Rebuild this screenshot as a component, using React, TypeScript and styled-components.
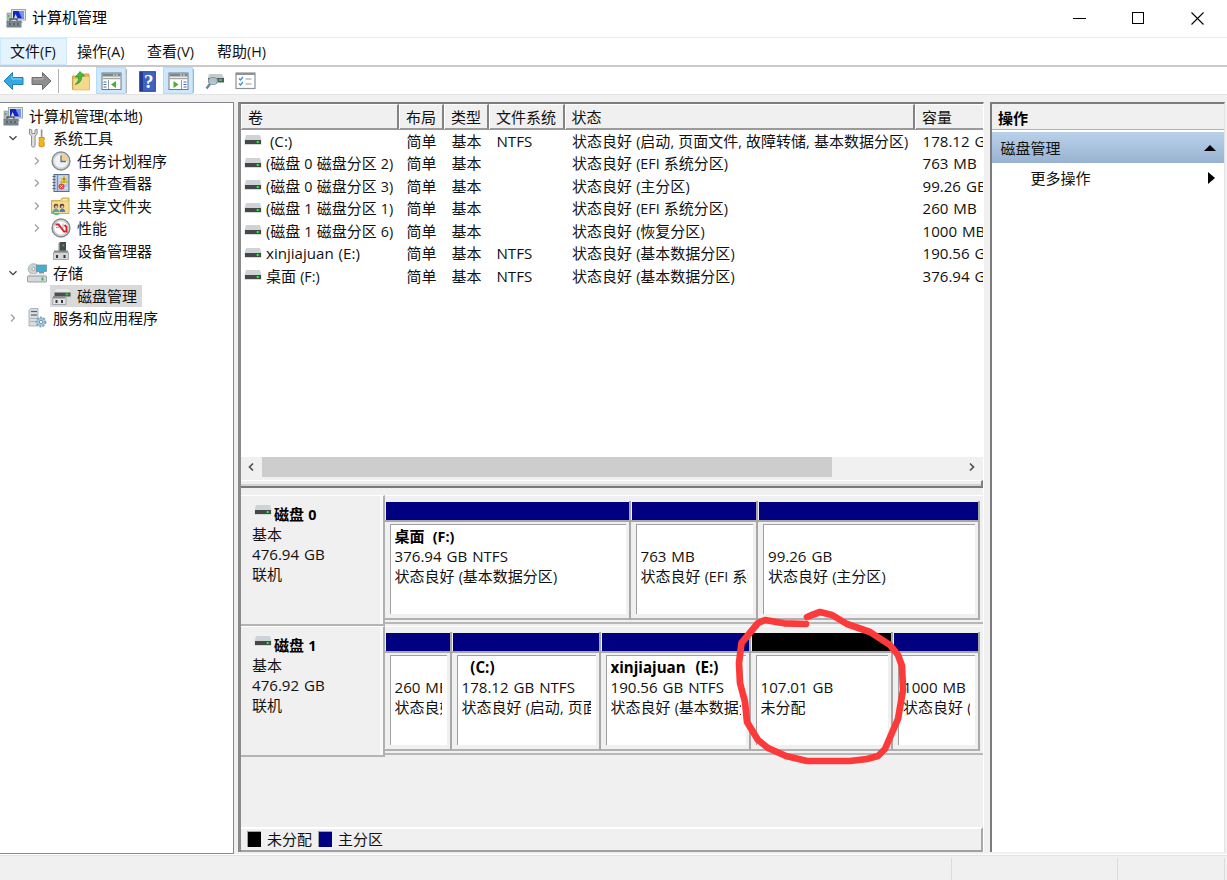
import React from "react";
import styled, { createGlobalStyle } from "styled-components";

const GlobalStyle = createGlobalStyle`
  * { box-sizing: border-box; }
  html, body { margin: 0; padding: 0; background: #f0f0f0; overflow: hidden; }
  svg { display: block; flex: none; }
`;

const Window = styled.div`
  position: relative;
  width: 1227px;
  height: 880px;
  display: flex;
  flex-direction: column;
  background: #f0f0f0;
  color: #111;
  font: 15px/20px "Noto Sans CJK SC", sans-serif;
  white-space: nowrap;
  overflow: hidden;
`;

const Latin = styled.span<{ $alone: boolean }>`
  font-family: "Open Sans", sans-serif;
  font-size: ${(p) => (p.$alone ? 15.1 : 14.3)}px;
  line-height: 1;
  word-spacing: ${(p) => (p.$alone ? 1 : 0.4)}px;
  white-space: pre;
`;

function Label({ children }: { children: string }) {
  const parts = children.split(/([\x20-\x7e]+)/);
  const alone = parts.every((part, i) => i % 2 === 1 || part === "");
  return (
    <>
      {parts.map((part, i) => (i % 2 ? <Latin key={i} $alone={alone}>{part}</Latin> : part))}
    </>
  );
}

/* ---------- title bar, menu, toolbar ---------- */

const TitleBar = styled.header`
  height: 37px;
  display: flex;
  align-items: center;
  padding: 0 0 2px 6px;
  gap: 6px;
  background: #fff;
`;
const TitleText = styled.span`
  flex: 1;
  padding-bottom: 1px;
  color: #000;
`;
const Caption = styled.div`
  display: flex;
  gap: 46px;
  padding: 2px 23px 0 0;
`;
const MenuBar = styled.nav`
  height: 30px;
  display: flex;
  border-top: 1px solid #ececec;
  border-bottom: 2px solid #cacaca;
  background: #fff;
`;
const MenuItem = styled.div<{ $w: number; $active?: boolean }>`
  width: ${(p) => p.$w}px;
  padding-left: ${(p) => (p.$active ? 9 : 10)}px;
  line-height: ${(p) => (p.$active ? 23 : 25)}px;
  border: ${(p) => (p.$active ? "1px solid #cce8ff" : "0")};
  background: ${(p) => (p.$active ? "#e5f3ff" : "transparent")};
`;
const ToolBar = styled.div`
  height: 28px;
  display: flex;
  align-items: stretch;
  background: #fff;
  border-bottom: 1px solid #e4e4e4;
`;
const Tool = styled.div<{ $w: number; $on?: boolean }>`
  width: ${(p) => p.$w}px;
  display: flex;
  align-items: center;
  justify-content: center;
  padding-top: 1px;
  background: ${(p) => (p.$on ? "#cce8ff" : "transparent")};
  border: ${(p) => (p.$on ? "1px solid #b4dcfa" : "0")};
`;
const ToolSep = styled.div<{ $l?: number; $r?: number }>`
  width: 1px;
  margin: 2px ${(p) => p.$r ?? 0}px 1px ${(p) => p.$l ?? 0}px;
  background: #b4b4b4;
`;

/* ---------- panes ---------- */

const Panes = styled.main`
  height: 759px;
  padding-top: 7px;
  display: flex;
`;
const TreePane = styled.aside`
  width: 234px;
  height: 752px;
  margin-right: 4px;
  padding-top: 1.5px;
  background: #fff;
  border-top: 1px solid #828790;
  border-right: 1px solid #828790;
  border-bottom: 1px solid #828790;
`;
const TreeRow = styled.div`
  height: 22.5px;
  display: flex;
  align-items: center;
`;
const Chevron = styled.div<{ $level: number }>`
  width: 26px;
  margin-left: ${(p) => (p.$level === 0 ? -24 : (p.$level - 1) * 24)}px;
  padding-left: 8px;
`;
const TreeItem = styled.div<{ $selected?: boolean }>`
  height: 22px;
  display: flex;
  align-items: center;
  gap: 6px;
  padding: 0 4.5px 0 1px;
  line-height: 22px;
  background: ${(p) => (p.$selected ? "#d9d9d9" : "transparent")};
`;
const CenterPane = styled.section`
  width: 746px;
  height: 750px;
  margin: 0 6px 0 0;
  border-left: 3px solid #8a8a8a;
  border-top: 2px solid #7c7c7c;
  border-right: 1px solid #fff;
  display: flex;
  flex-direction: column;
  overflow: hidden;
`;

/* ---------- volume list ---------- */

const columns = "158px 45px 45px 75.5px 350.5px 100px";

const VolumeList = styled.div`
  height: 353px;
  width: 742px;
  background: #fff;
  overflow: hidden;
`;
const HeaderRow = styled.div`
  display: grid;
  grid-template-columns: ${columns};
  height: 25.5px;
  background: #f0f0f0;
  border-bottom: 2px solid #9a9a9a;
`;
const HeaderCell = styled.div`
  padding-left: 6px;
  line-height: 24px;
  border-left: 1px solid #fff;
  border-top: 1px solid #fff;
  border-right: 2px solid #838383;
`;
const VolumeRow = styled.div`
  display: grid;
  grid-template-columns: ${columns};
  height: 22.5px;
  line-height: 21px;
`;
const VolumeCell = styled.div`
  display: flex;
  align-items: center;
  padding: 0 0 1px 7.5px;
`;
const NameCell = styled.div`
  display: flex;
  align-items: center;
  gap: 4px;
  padding: 0 0 1px 3px;
`;
const ScrollBar = styled.div`
  height: 21px;
  width: 742px;
  display: flex;
  align-items: center;
  justify-content: space-between;
  background: #f0f0f0;
  padding: 0 7px 1px 0;
`;
const ScrollThumb = styled.div`
  width: 570px;
  height: 20px;
  margin-right: auto;
  margin-left: 6px;
  background: #cdcdcd;
`;
const Splitter = styled.div`
  height: 8px;
  width: 742px;
  margin-top: 2px;
  border-top: 1px solid #fff;
  border-right: 2px solid #808080;
  border-bottom: 2px solid #7a7a7a;
  flex: none;
  background: linear-gradient(#f0f0f0 0 3px, #d4d4d4 3px 5px);
`;
const GraphGap = styled.div`
  height: 7px;
  flex: none;
`;

/* ---------- disk graph ---------- */

const DiskRow = styled.div`
  display: flex;
  height: 131px;
  flex: none;
`;
const DiskLabel = styled.div`
  width: 143.5px;
  padding: 8px 0 0 11px;
  line-height: 20.1px;
  border-top: 1px solid #fff;
  border-right: 2px solid #b0b0b0;
  border-bottom: 2px solid #b4b4b4;
  box-shadow: inset -3px 0 0 #f8f8f8;
`;
const DiskName = styled.div`
  display: flex;
  gap: 2px;
  padding-left: 2px;
  font-weight: 700;
  color: #000;
`;
const Partitions = styled.div`
  display: flex;
  width: 598px;
  height: 129px;
  padding-top: 5px;
  border-top: 1px solid #fff;
  border-bottom: 2px solid #b8b8b8;
`;
const Partition = styled.div<{ $w: number }>`
  width: ${(p) => p.$w}px;
  flex: none;
  height: 119px;
  display: flex;
  flex-direction: column;
  border-right: 2px solid #a8a8a8;
  border-bottom: 2px solid #b0b0b0;
  padding-top: 1px;
`;
const Band = styled.div<{ $free?: boolean }>`
  height: 18px;
  flex: none;
  margin: 0 0 0 1px;
  background: ${(p) => (p.$free ? "#000" : "#000080")};
`;
const BandLine = styled.div`
  height: 1.5px;
  flex: none;
  background: #a8a8a8;
`;
const PartitionBox = styled.div`
  flex: 1;
  min-height: 0;
  margin: 2px 3px 4px 5px;
  border-left: 1.5px solid #a0a0a0;
  border-top: 1.5px solid #a0a0a0;
  background: #fff;
  padding: 1.5px 5px 0 4px;
`;
const PartitionText = styled.div`
  height: 84px;
  overflow: hidden;
  line-height: 20.3px;
`;
const PartitionTitle = styled.div`
  height: 20px;
  font-weight: 700;
  color: #000;
`;
const Filler = styled.div`
  flex: 1;
`;
const Legend = styled.footer`
  height: 25px;
  width: 742px;
  display: flex;
  align-items: center;
  padding: 0 0 1px 6px;
  border-top: 2px solid #fff;
  border-right: 2px solid #a8a8a8;
  border-bottom: 2px solid #a0a0a0;
  flex: none;
`;
const Swatch = styled.span<{ $c: string }>`
  width: 14px;
  height: 16px;
  margin-right: 6px;
  border-left: 1px solid #a0a0a0;
  border-top: 1px solid #a0a0a0;
  background: ${(p) => p.$c};
`;
const LegendText = styled.span`
  margin-right: 6px;
`;

/* ---------- actions pane ---------- */

const ActionsPane = styled.aside`
  width: 235px;
  height: 750px;
  border-left: 2px solid #7c7c7c;
  border-top: 2px solid #7c7c7c;
  border-right: 1px solid #e4e4e4;
  background: #fff;
`;
const ActionsTitle = styled.div`
  height: 26px;
  padding-left: 6px;
  line-height: 27px;
  font-weight: 700;
  background: #f0f0f0;
  border-bottom: 1px solid #b4b4b4;
  color: #000;
`;
const ActionsGroup = styled.div`
  height: 31px;
  margin-top: 2px;
  padding: 0 8px 0 8.5px;
  display: flex;
  align-items: center;
  justify-content: space-between;
  background: linear-gradient(#b9d1ea, #98b2d1);
`;
const ActionsItem = styled.div`
  height: 29px;
  padding: 0 9px 0 38.5px;
  display: flex;
  align-items: center;
  justify-content: space-between;
`;

const StatusBar = styled.footer`
  height: 26px;
  display: flex;
  justify-content: flex-end;
  border-top: 1px solid #fff;
  box-shadow: inset 0 1px 0 #e2e2e2;
  padding: 3px 2px 0 0;
`;
const StatusCell = styled.div<{ $w: number }>`
  width: ${(p) => p.$w}px;
  border-left: 1px solid #dcdcdc;
`;
const LastStatusCell = styled(StatusCell)`
  border-right: 1px solid #dcdcdc;
`;
const Annotation = styled.svg`
  position: absolute;
  left: 730px;
  top: 605px;
`;

/* ---------- icons ---------- */

const Computer = () => (
  <svg width="20" height="20" viewBox="0 0 20 20">
    <rect x="1" y="5" width="5" height="9" fill="#b4babd" stroke="#8b9294" strokeWidth=".6" />
    <rect x="1.6" y="7" width="1.6" height="2" fill="#39c33c" />
    <rect x="5.5" y="1.5" width="14" height="10.5" fill="#e2e4e2" stroke="#a2a6a3" />
    <path d="M7 3h11v7.5H7z" fill="#1226c4" />
    <path d="M12.5 3H18v7.5h-2z" fill="#6f95f0" />
    <path d="M9 12h6l2 3h-6z" fill="#b8bcbe" />
    <path d="m9.5 6 1.5 3 1 4-5 0z" fill="#d5d8de" />
    <path d="M4 13v-2h7v2" fill="none" stroke="#505a60" strokeWidth="1.3" />
    <rect x=".5" y="13" width="15" height="6.5" fill="#75828a" />
    <path d="M.5 16h15" stroke="#98a3a8" strokeWidth=".8" />
    <path d="M4 15v2.200M8 15v2.200M12 15v2.200" stroke="#3f4a50" strokeWidth="1.200" />
  </svg>
);

const Drive = () => (
  <svg width="18" height="12" viewBox="0 0 18 12">
    <path d="M2 1h14l1.500 5H.5z" fill="#cfd3d8" />
    <path d="M.5 6h17v5H.5z" fill="#d6d8da" />
    <path d="M1 6h16v4H1z" fill="#454849" />
    <rect x="12" y="7" width="3.500" height="2" fill="#1f8f2a" />
    <rect x="13" y="7" width="1.500" height="2" fill="#35f048" />
  </svg>
);

const Tools = () => (
  <svg width="20" height="20" viewBox="0 0 20 20">
    <path d="M2.500 1v5l2 2v9.500c0 2.200 3.600 2.200 3.600 0V8l2-2V1L8 2v3.500H4.800V2z" fill="#dcdedd" stroke="#818583" strokeWidth=".9" />
    <path d="M13.800 1.500h1.600V10h-1.600z" fill="#909494" />
    <path d="M12 9.500h5.200v2.500l-1 1 1 1.500V18q-2.600 2-5.200 0v-3.500l1-1.500-1-1z" fill="#f5b41c" stroke="#c98510" strokeWidth=".8" />
  </svg>
);

const Clock = () => (
  <svg width="20" height="20" viewBox="0 0 20 20">
    <circle cx="10" cy="10" r="8.900" fill="#e3e7ec" stroke="#8a8c8e" strokeWidth="1.500" />
    <circle cx="10" cy="10" r="7.300" fill="#f0f3f8" stroke="#c4c7ca" />
    <path d="M10 3a7 7 0 0 1 7 7h-7z" fill="#f3d18c" />
    <path d="M10 4.500V10.500H15" fill="none" stroke="#59738f" strokeWidth="1.300" />
  </svg>
);

const EventLog = () => (
  <svg width="20" height="20" viewBox="0 0 20 20">
    <rect x="3" y="1.500" width="15" height="17" fill="#b8cbe4" stroke="#5b6c91" />
    <path d="M6.500 2v16" stroke="#7890b6" />
    <path d="M1.500 3.500h3m-3 3h3m-3 3h3m-3 3h3m-3 3h3" stroke="#5a6277" strokeWidth="1.200" />
    <path d="M8 4h8M8 7h8M8 10h8M8 15h9" stroke="#e6edf7" />
    <path d="m13 3 3.500 6.500H9.500z" fill="#f6d51e" stroke="#c39d14" strokeWidth=".6" />
    <path d="M13 5.200v2M13 8v.8" stroke="#333" />
    <circle cx="10.500" cy="13.500" r="3" fill="#df4548" />
    <path d="m9.400 12.400 2.200 2.200m0-2.200-2.200 2.200" stroke="#fff" strokeWidth=".9" />
  </svg>
);

const SharedFolder = () => (
  <svg width="20" height="20" viewBox="0 0 20 20">
    <path d="M.5 4.500h9l1.500-2.500h7v15.500H.5z" fill="#efcf75" stroke="#c59a3c" strokeWidth=".8" />
    <path d="M1 6h16.500v11H1z" fill="#f6dc92" />
    <path d="M11.500 3.800h5" stroke="#fff3cf" />
    <circle cx="5" cy="10" r="2.300" fill="#6b4a35" />
    <circle cx="5.300" cy="10.800" r="1.400" fill="#e8bd98" />
    <circle cx="11" cy="10" r="2.300" fill="#4b3a33" />
    <circle cx="11.300" cy="10.800" r="1.400" fill="#e8bd98" />
    <path d="M2 16q0-3.500 3-3.500t3 3.500z" fill="#5a9fc0" />
    <path d="M8.500 16q0-3.500 2.800-3.500t2.800 3.500z" fill="#4d7fae" />
    <path d="M1 15.500q2.500 4 7 2" fill="none" stroke="#58b98a" strokeWidth="2" />
  </svg>
);

const Gauge = () => (
  <svg width="20" height="20" viewBox="0 0 20 20">
    <circle cx="10" cy="10" r="8.900" fill="#e8e8e8" stroke="#86898b" strokeWidth="1.500" />
    <circle cx="10" cy="10" r="7.200" fill="#fff" stroke="#bbb" strokeWidth=".8" />
    <path d="M8 5.500v4M12 5.500v5M5 9.500h3" fill="none" stroke="#999" strokeWidth=".9" />
    <path d="M4.500 6.500h3l5.500 7h2.500V9l-2-2" fill="none" stroke="#dc2027" strokeWidth="1.900" />
  </svg>
);

const Device = () => (
  <svg width="20" height="20" viewBox="0 0 20 20">
    <path d="M9 1h6v9H9z" fill="#454b4d" />
    <path d="m9 1-1.500 1v8H9z" fill="#858b8d" />
    <rect x="11.500" y="3.500" width="1.800" height="1.800" fill="#24d23a" />
    <path d="M3 9.500h14v2.500H3z" fill="#85898b" />
    <path d="M2.500 11.500h15v7h-15z" fill="#d3d5d6" stroke="#989c9e" strokeWidth=".8" />
    <path d="M5 14h2v3H5zM12.500 14h2v3h-2z" fill="#303638" />
  </svg>
);

const Storage = () => (
  <svg width="20" height="20" viewBox="0 0 20 20">
    <circle cx="6.500" cy="6" r="5.300" fill="#cbd2d7" stroke="#92989d" strokeWidth=".7" />
    <circle cx="6.500" cy="6" r="1.500" fill="#fff" stroke="#777" strokeWidth=".6" />
    <path d="M1 5q1-3 4-4l1 4z" fill="#bddbb3" />
    <rect x="9.500" y="2" width="10" height="6.500" fill="#43afd1" stroke="#71868d" strokeWidth=".7" />
    <path d="M12 8.500h5v2h-5z" fill="#879197" />
    <path d="M2 11h16l1.500 2.500H.5z" fill="#e8ebed" />
    <rect x=".5" y="13" width="19" height="6" rx="1" fill="#d4d8db" stroke="#858b90" strokeWidth=".8" />
    <rect x="14.500" y="14.500" width="2" height="3" fill="#28bf36" />
  </svg>
);

const DiskManage = () => (
  <svg width="20" height="20" viewBox="0 0 20 20">
    <path d="M5.500 3h12l2 3.500h-16z" fill="#e6e8e9" />
    <path d="M3.500 6.500h16v4h-16z" fill="#4b4f50" />
    <rect x="14.500" y="7.500" width="3" height="1.800" fill="#24d435" />
    <path d="M2 11h13v7.500H1.500z" fill="#e2e4e5" stroke="#949899" strokeWidth=".8" />
    <path d="M2 10h12v2.500H2z" fill="#8a8d8e" />
    <path d="M4.500 14h2v3h-2zM10 14h2v3h-2z" fill="#34393b" />
  </svg>
);

const Services = () => (
  <svg width="20" height="20" viewBox="0 0 20 20">
    <path d="m2 2 2-1.500h7V18H2z" fill="#d8dee2" stroke="#9aa5ad" strokeWidth=".8" />
    <path d="M4 3.500h6" stroke="#53636e" strokeWidth="1.200" />
    <path d="M4 7h6" stroke="#53636e" strokeWidth="1.200" />
    <path d="M3 10.500h8M3 13.500h6" stroke="#aab3b9" />
    <circle cx="14" cy="14" r="4.400" fill="#abc9df" stroke="#7da4c0" strokeWidth="2" strokeDasharray="2 1.200" />
    <circle cx="14" cy="14" r="1.700" fill="#eff6fa" stroke="#759ab5" />
  </svg>
);

const Arrow = ({ forward }: { forward?: boolean }) => (
  <svg width="21" height="20" viewBox="0 0 21 20">
    <path
      d={forward ? "M20 10 11.500 1.500v5H1v7h10.500v5z" : "M1 10 9.500 1.500v5H20v7H9.500v5z"}
      fill={forward ? "#8e8e8e" : "#30a9e6"}
      stroke={forward ? "#6e6e6e" : "#247eae"}
      strokeLinejoin="round"
    />
    <path d={forward ? "M2 8h10V5" : "M19 8H9V5"} fill="none" stroke={forward ? "#b6b6b6" : "#82d5f6"} />
  </svg>
);

const FolderUp = () => (
  <svg width="20" height="22" viewBox="0 0 20 22">
    <path d="M1.500 6h7l2-2H18v15.500H1.500z" fill="#e8bd58" stroke="#bd9440" strokeWidth=".8" />
    <path d="M2 8.500h7l2-2h7.500V20H2z" fill="#f5d98a" stroke="#d7ad51" strokeWidth=".6" />
    <path d="M4 14.500q4-2.500 3.500-7.500H4.500L9 1.500 13.500 6h-2.700q.2 7-6.800 8.500z" fill="#41ba3d" stroke="#27912b" strokeWidth=".7" />
  </svg>
);

const PanelIcon = ({ right }: { right?: boolean }) => (
  <svg width="21" height="19" viewBox="0 0 21 19">
    <rect x="1" y="1" width="19" height="16.500" fill="#fff" stroke="#777" />
    <rect x="1.500" y="1.500" width="18" height="3" fill="#7e8588" />
    <path d="M12 3h2m1 0h2" stroke="#e3e7e9" />
    <path d="M1.500 6.500h18" stroke="#a2a7a9" strokeWidth="1.500" />
    <path d={right ? "M13.500 8v9" : "M7.500 8v9"} stroke="#999" />
    <path d={right ? "M15.500 10h3m-3 2.500h3m-3 2.500h3" : "M2.500 10h3m-3 2.500h3m-3 2.500h3"} stroke="#3c6fae" strokeWidth="1.200" />
    <path d={right ? "m5.500 9 5 3.500-5 3.500z" : "m15 9-5 3.500 5 3.500z"} fill="#4cae2c" />
  </svg>
);

const HelpIcon = () => (
  <svg width="17" height="21" viewBox="0 0 17 21">
    <rect x=".7" y=".7" width="15.600" height="19.600" fill="#3e63c1" stroke="#26428f" />
    <path d="M1 1h3v19H1z" fill="#233c91" />
    <text x="9.700" y="16.500" textAnchor="middle" fill="#fff" fontFamily="Liberation Serif, serif" fontSize="19" fontWeight="700">?</text>
  </svg>
);

const DriveSearch = () => (
  <svg width="20" height="18" viewBox="0 0 20 18">
    <path d="M4 2h13l2 4H3z" fill="#c6cbcc" />
    <path d="M3 6h16v4.500H3z" fill="#555b5d" />
    <rect x="14" y="7" width="3" height="2" fill="#26d43d" />
    <ellipse cx="8" cy="9" rx="4.500" ry="3.500" fill="#b8cdd8" fillOpacity=".9" stroke="#8798a2" strokeWidth="1.200" />
    <path d="m5 12-3.500 4.500" stroke="#6c8595" strokeWidth="2.400" />
  </svg>
);

const Checklist = () => (
  <svg width="21" height="18" viewBox="0 0 21 18">
    <rect x="1" y="1" width="19" height="15.500" fill="#fff" stroke="#8d9294" strokeWidth="1.200" />
    <path d="M1 2h19" stroke="#8d9294" strokeWidth="2" />
    <path d="m4 6.500 1.500 1.500L8 5M4 11.500 5.500 13 8 10" fill="none" stroke="#3b90cf" strokeWidth="1.300" />
    <path d="M10.500 7h6m-6 5h6" stroke="#b6babc" strokeWidth="1.300" />
  </svg>
);

const ChevronIcon = ({ dir }: { dir: "down" | "right" }) => (
  <svg width="10" height="10" viewBox="0 0 10 10">
    <path
      d={dir === "down" ? "M1.500 3.200 5 6.700l3.500-3.500" : "M3 1.500 6.500 5 3 8.500"}
      fill="none"
      stroke={dir === "down" ? "#404040" : "#a0a0a0"}
      strokeWidth="1.300"
    />
  </svg>
);

/* ---------- data ---------- */

type Node = { level: number; open?: "down" | "right"; icon: React.ReactNode; text: string; selected?: boolean };

const tree: Node[] = [
  { level: 0, icon: <Computer />, text: "计算机管理(本地)" },
  { level: 1, open: "down", icon: <Tools />, text: "系统工具" },
  { level: 2, open: "right", icon: <Clock />, text: "任务计划程序" },
  { level: 2, open: "right", icon: <EventLog />, text: "事件查看器" },
  { level: 2, open: "right", icon: <SharedFolder />, text: "共享文件夹" },
  { level: 2, open: "right", icon: <Gauge />, text: "性能" },
  { level: 2, icon: <Device />, text: "设备管理器" },
  { level: 1, open: "down", icon: <Storage />, text: "存储" },
  { level: 2, icon: <DiskManage />, text: "磁盘管理", selected: true },
  { level: 1, open: "right", icon: <Services />, text: "服务和应用程序" },
];

const volumes = [
  [" (C:)", "NTFS", "状态良好 (启动, 页面文件, 故障转储, 基本数据分区)", "178.12 GB"],
  ["(磁盘 0 磁盘分区 2)", "", "状态良好 (EFI 系统分区)", "763 MB"],
  ["(磁盘 0 磁盘分区 3)", "", "状态良好 (主分区)", "99.26 GB"],
  ["(磁盘 1 磁盘分区 1)", "", "状态良好 (EFI 系统分区)", "260 MB"],
  ["(磁盘 1 磁盘分区 6)", "", "状态良好 (恢复分区)", "1000 MB"],
  ["xinjiajuan (E:)", "NTFS", "状态良好 (基本数据分区)", "190.56 GB"],
  ["桌面 (F:)", "NTFS", "状态良好 (基本数据分区)", "376.94 GB"],
];

type Part = { w: number; title: string; size: string; status: string; free?: boolean };

const disks: { name: string; size: string; parts: Part[] }[] = [
  {
    name: "磁盘 0",
    size: "476.94 GB",
    parts: [
      { w: 246, title: "桌面  (F:)", size: "376.94 GB NTFS", status: "状态良好 (基本数据分区)" },
      { w: 127.5, title: "", size: "763 MB", status: "状态良好 (EFI 系统分区)" },
      { w: 222, title: "", size: "99.26 GB", status: "状态良好 (主分区)" },
    ],
  },
  {
    name: "磁盘 1",
    size: "476.92 GB",
    parts: [
      { w: 67, title: "", size: "260 MB", status: "状态良好 (EFI 系统分区)" },
      { w: 149, title: "  (C:)", size: "178.12 GB NTFS", status: "状态良好 (启动, 页面文件, 故障转储)" },
      { w: 150, title: "xinjiajuan  (E:)", size: "190.56 GB NTFS", status: "状态良好 (基本数据分区)" },
      { w: 142.5, title: "", size: "107.01 GB", status: "未分配", free: true },
      { w: 87, title: "", size: "1000 MB", status: "状态良好 (恢复分区)" },
    ],
  },
];

export default function App() {
  return (
    <>
      <GlobalStyle />
      <Window>
        <TitleBar>
          <Computer />
          <TitleText>计算机管理</TitleText>
          <Caption>
            <svg width="13" height="13"><path d="M0 6.500h13" stroke="#000" /></svg>
            <svg width="13" height="13"><rect x=".5" y=".5" width="11" height="11" fill="none" stroke="#000" /></svg>
            <svg width="13" height="13"><path d="m.5.5 12 12m0-12-12 12" stroke="#000" strokeWidth="1.100" /></svg>
          </Caption>
        </TitleBar>
        <MenuBar>
          <MenuItem $w={67} $active><Label>文件(F)</Label></MenuItem>
          <MenuItem $w={70}><Label>操作(A)</Label></MenuItem>
          <MenuItem $w={70}><Label>查看(V)</Label></MenuItem>
          <MenuItem $w={70}><Label>帮助(H)</Label></MenuItem>
        </MenuBar>
        <ToolBar>
          <Tool $w={26}><Arrow /></Tool>
          <Tool $w={31}><Arrow forward /></Tool>
          <ToolSep $l={1} $r={7} />
          <Tool $w={30}><FolderUp /></Tool>
          <Tool $w={30} $on><PanelIcon /></Tool>
          <ToolSep $r={5} />
          <Tool $w={31}><HelpIcon /></Tool>
          <Tool $w={30} $on><PanelIcon right /></Tool>
          <ToolSep $r={6} />
          <Tool $w={30}><DriveSearch /></Tool>
          <Tool $w={30}><Checklist /></Tool>
        </ToolBar>
        <Panes>
          <TreePane>
            {tree.map((n) => (
              <TreeRow key={n.text}>
                <Chevron $level={n.level}>{n.open && <ChevronIcon dir={n.open} />}</Chevron>
                <TreeItem $selected={n.selected}>
                  {n.icon}
                  <span><Label>{n.text}</Label></span>
                </TreeItem>
              </TreeRow>
            ))}
          </TreePane>
          <CenterPane>
            <VolumeList>
              <HeaderRow>
                {["卷", "布局", "类型", "文件系统", "状态", "容量"].map((h) => (
                  <HeaderCell key={h}>{h}</HeaderCell>
                ))}
              </HeaderRow>
              {volumes.map(([name, fs, status, size]) => (
                <VolumeRow key={name}>
                  <NameCell><Drive /><span><Label>{name}</Label></span></NameCell>
                  <VolumeCell>简单</VolumeCell>
                  <VolumeCell>基本</VolumeCell>
                  <VolumeCell><span><Label>{fs}</Label></span></VolumeCell>
                  <VolumeCell><span><Label>{status}</Label></span></VolumeCell>
                  <VolumeCell><span><Label>{size}</Label></span></VolumeCell>
                </VolumeRow>
              ))}
            </VolumeList>
            <ScrollBar>
              <svg width="15" height="10"><path d="M12 1.500 8.500 5l3.500 3.500" fill="none" stroke="#505050" strokeWidth="1.700" /></svg>
              <ScrollThumb />
              <svg width="8" height="10"><path d="M2 1.500 5.500 5 2 8.500" fill="none" stroke="#505050" strokeWidth="1.700" /></svg>
            </ScrollBar>
            <Splitter />
            <GraphGap />
            {disks.map((d) => (
              <DiskRow key={d.name}>
                <DiskLabel>
                  <DiskName><Drive /><span><Label>{d.name}</Label></span></DiskName>
                  <div>基本</div>
                  <div><Label>{d.size}</Label></div>
                  <div>联机</div>
                </DiskLabel>
                <Partitions>
                  {d.parts.map((p) => (
                    <Partition key={p.size} $w={p.w}>
                      <Band $free={p.free} />
                      <BandLine />
                      <PartitionBox>
                        <PartitionText>
                          <PartitionTitle><Label>{p.title}</Label></PartitionTitle>
                          <div><Label>{p.size}</Label></div>
                          <div><Label>{p.status}</Label></div>
                        </PartitionText>
                      </PartitionBox>
                    </Partition>
                  ))}
                </Partitions>
              </DiskRow>
            ))}
            <Filler />
            <Legend>
              <Swatch $c="#000" /><LegendText>未分配</LegendText>
              <Swatch $c="#000080" /><LegendText>主分区</LegendText>
            </Legend>
          </CenterPane>
          <ActionsPane>
            <ActionsTitle>操作</ActionsTitle>
            <ActionsGroup>
              磁盘管理
              <svg width="12" height="7"><path d="M0 7 6 1l6 6z" /></svg>
            </ActionsGroup>
            <ActionsItem>
              更多操作
              <svg width="7" height="12"><path d="m0 0 7 6-7 6z" /></svg>
            </ActionsItem>
          </ActionsPane>
        </Panes>
        <StatusBar>
          <StatusCell $w={166} />
          <LastStatusCell $w={108} />
        </StatusBar>
        <Annotation width="180" height="165" viewBox="730 605 180 165">
          <path
            d="M806 624 784 623.300 765 620 758 623 741.500 643 739 663 740 683 745 702 747 722 758 740 768 748 786 756 807 761 850 761 867 759 878 756 885 749 891 735 898 719 903 690 902 666 898 655 890 645 870 632 847 624 832 615 820 612 812 615 807 617"
            fill="none"
            stroke="#fc3a3a"
            strokeWidth="6.700"
            strokeLinecap="round"
            strokeLinejoin="round"
          />
        </Annotation>
      </Window>
    </>
  );
}
